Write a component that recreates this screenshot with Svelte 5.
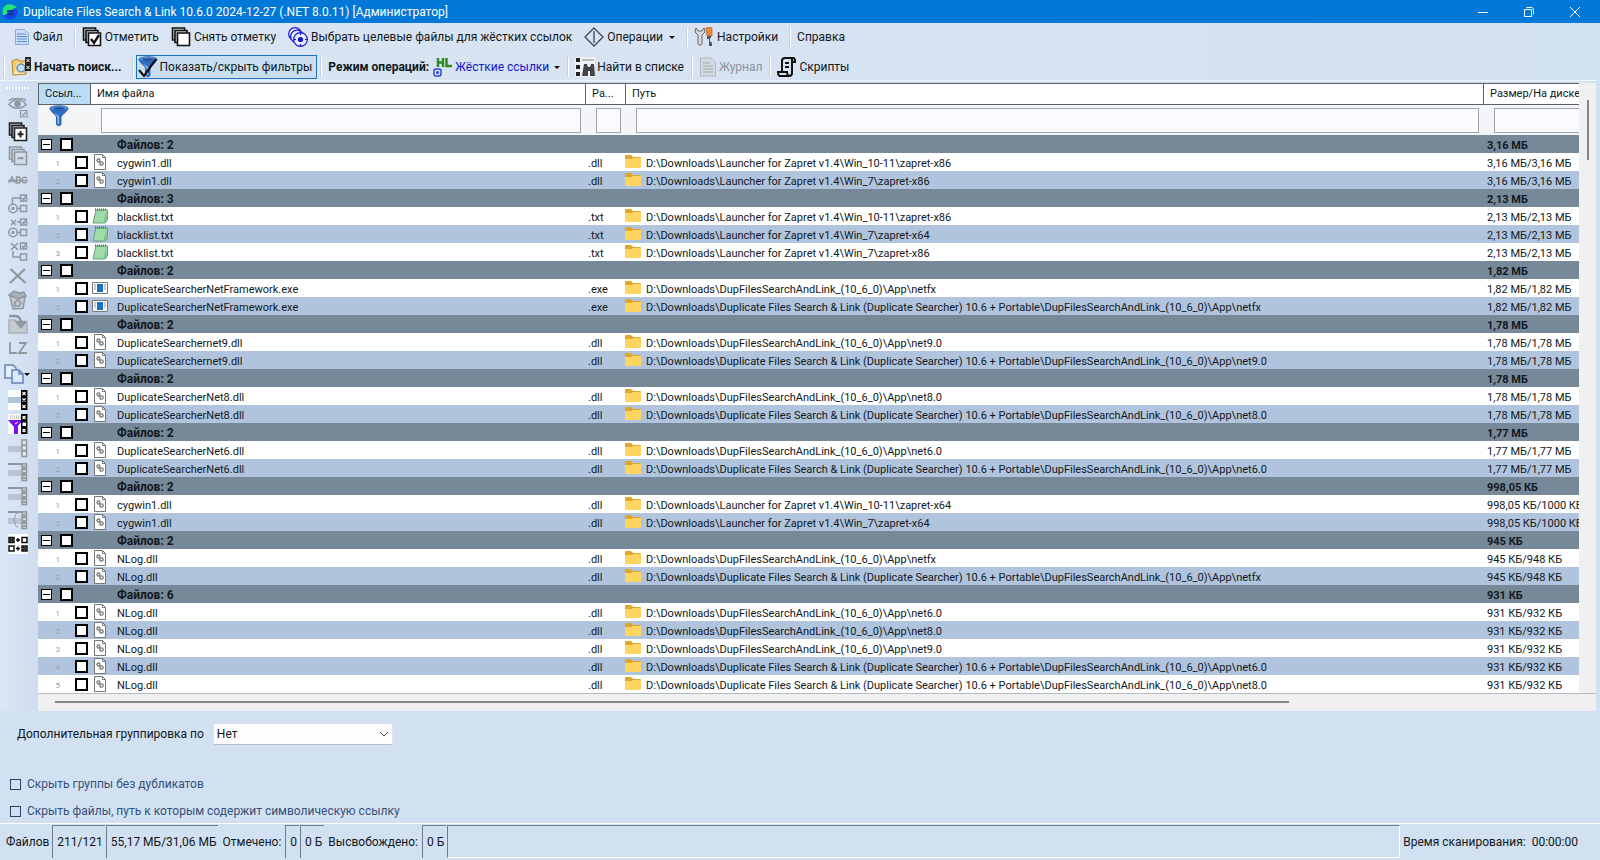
<script lang="ts">
  type FileRow = { name: string; ext: string; path: string; size: string };
  type Group = { size: string; files: FileRow[] };

  const launcher = 'D:\\Downloads\\Launcher for Zapret v1.4\\';
  const portable = 'D:\\Downloads\\DupFilesSearchAndLink_(10_6_0)\\App\\';
  const full = 'D:\\Downloads\\Duplicate Files Search & Link (Duplicate Searcher) 10.6 + Portable\\DupFilesSearchAndLink_(10_6_0)\\App\\';

  function group(name: string, total: string, size: string, paths: string[]): Group {
    const ext = name.slice(name.lastIndexOf('.'));
    return { size: total, files: paths.map((path) => ({ name, ext, path, size })) };
  }

  const groups: Group[] = [
    group('cygwin1.dll', '3,16 МБ', '3,16 МБ/3,16 МБ', [launcher + 'Win_10-11\\zapret-x86', launcher + 'Win_7\\zapret-x86']),
    group('blacklist.txt', '2,13 МБ', '2,13 МБ/2,13 МБ', [launcher + 'Win_10-11\\zapret-x86', launcher + 'Win_7\\zapret-x64', launcher + 'Win_7\\zapret-x86']),
    group('DuplicateSearcherNetFramework.exe', '1,82 МБ', '1,82 МБ/1,82 МБ', [portable + 'netfx', full + 'netfx']),
    group('DuplicateSearchernet9.dll', '1,78 МБ', '1,78 МБ/1,78 МБ', [portable + 'net9.0', full + 'net9.0']),
    group('DuplicateSearcherNet8.dll', '1,78 МБ', '1,78 МБ/1,78 МБ', [portable + 'net8.0', full + 'net8.0']),
    group('DuplicateSearcherNet6.dll', '1,77 МБ', '1,77 МБ/1,77 МБ', [portable + 'net6.0', full + 'net6.0']),
    group('cygwin1.dll', '998,05 КБ', '998,05 КБ/1000 КБ', [launcher + 'Win_10-11\\zapret-x64', launcher + 'Win_7\\zapret-x64']),
    group('NLog.dll', '945 КБ', '945 КБ/948 КБ', [portable + 'netfx', full + 'netfx']),
    group('NLog.dll', '931 КБ', '931 КБ/932 КБ', [portable + 'net6.0', portable + 'net8.0', portable + 'net9.0', full + 'net6.0', full + 'net8.0'])
  ];
  // the last group is cut off by the bottom of the list
  const counts = [2, 3, 2, 2, 2, 2, 2, 2, 6];

  const sideTools = [
    { icon: 'eye', label: 'Показать отмеченные' },
    { icon: 'expand', label: 'Развернуть все' },
    { icon: 'collapse', label: 'Свернуть все' },
    { icon: 'abc', label: 'Переименовать' },
    { icon: 'link1', label: 'Создать ссылки' },
    { icon: 'link2', label: 'Заменить ссылками' },
    { icon: 'link3', label: 'Разорвать ссылки' },
    { icon: 'cross', label: 'Удалить' },
    { icon: 'bin', label: 'В корзину' },
    { icon: 'move', label: 'Переместить' },
    { icon: 'lz', label: 'Сжать' },
    { icon: 'copy', label: 'Копировать', menu: true },
    { icon: 'rows', label: 'Отметить строки' },
    { icon: 'rowsFilter', label: 'Отметить по фильтру' },
    { icon: 'rowsOff', label: 'Снять отметку строк' },
    { icon: 'rowsCol', label: 'Отметить столбец' },
    { icon: 'rowsCol2', label: 'Отметить ниже' },
    { icon: 'rowsCol3', label: 'Отметить выше' },
    { icon: 'invert', label: 'Обратить отметку' }
  ];

  let showFilters = $state(true);
  let grouping = $state('Нет');
</script>

{#snippet stack(stroke: string, fill: string, mark: string)}
  <svg width="20" height="20" viewBox="0 0 20 20" fill={fill} stroke={stroke} stroke-width="1.6">
    <path d="M1.500 1h12v12h-12z" />
    <path d="M4 3.500h12v12h-12z" />
    <path d="M6.500 6h12v12.500h-12z" fill={mark === 'minus' ? fill : '#fff'} />
    {#if mark === 'check'}<path d="M9 12l3 4 5-8" fill="none" stroke-width="2.400" />{/if}
    {#if mark === 'plus'}<path d="M9.500 12.200h6M12.500 9v6.500" stroke-width="2" />{/if}
    {#if mark === 'minus'}<path d="M9.500 12.200h6" stroke-width="2" />{/if}
  </svg>
{/snippet}

{#snippet funnel(check: boolean)}
  <svg width="20" height="22" viewBox="0 0 20 22">
    <path d="M1 3c0 3 6 7 6.500 9v7.500c1 1.500 3.500 1.500 4.500 0V12c.5-2 7-6 7-9z" fill="#2d6fc4" stroke="#1d4f9e" stroke-width=".8" />
    <path d="M5 8l3.500 4v7h1.500v-8z" fill="#8fc4f5" />
    <ellipse cx="10" cy="3.200" rx="9" ry="2.500" fill="#5a9be0" stroke="#23589f" stroke-width=".8" />
    <ellipse cx="10" cy="3.500" rx="6" ry="1.300" fill="#1f5098" />
    {#if check}<path d="M1 14l5 6L18 3" fill="none" stroke="#111" stroke-width="2.200" />{/if}
  </svg>
{/snippet}

{#snippet rowIcon(name: string)}
  <svg width="20" height="20" viewBox="0 0 20 20">
    {#if name === 'rows' || name === 'rowsFilter'}
      <path fill="#fff" d="M0 0h20v20H0z" />
      {#if name === 'rows'}
        <path fill="#b0c4de" d="M0 7h14v6H0z" />
      {:else}
        <path d="M2 2h11M2 4h11" stroke="#999" stroke-dasharray="1 1" />
        <path fill="#7a10f0" d="M0 6h15l-5 6v8H6v-7z" />
        <path d="M7 10l3-2" stroke="#fff" />
      {/if}
      <path d="M13 0h6.500v20H13z" />
      <path d="M14.500 2l3 3m0-3l-3 3m0 10l3 3m0-3l-3 3" stroke="#fff" stroke-width="1.200" />
      {#if name === 'rows'}<path d="M14.500 8.500l3 3m0-3l-3 3" stroke="#fff" stroke-width="1.200" />{:else}<path fill="#fff" d="M14.500 8.500h3.500v3.500h-3.500z" />{/if}
    {:else}
      <path fill="#bdc4cc" d="M0 8h14v6H0z" />
      {#if name !== 'rowsOff'}<path fill="#8f969e" d="M0 1h19v2H0z" />{/if}
      {#if name === 'rowsCol3'}<path d="M10 3c-5 1-1 6-5 7 4 1 0 6 5 7" fill="none" stroke="#8f969e" />{/if}
      <path fill="#e3e9ef" stroke="#8f969e" stroke-width="1.500" d="M14 2h4.500v5H14zM14 7.500h4.500v5H14zM14 13h4.500v5.500H14z" />
      {#if name !== 'rowsOff'}<path d="M15 4l2.500 2m0-2L15 6m0 4l2.500 2m0-2L15 12m0 3l2.500 2m0-2L15 17" stroke="#8f969e" stroke-width="1.300" />{/if}
    {/if}
  </svg>
{/snippet}

{#snippet icon(name: string)}
  {#if name === 'expand'}{@render stack('#222', '#a9b1ba', 'plus')}
  {:else if name === 'collapse'}{@render stack('#8f969e', '#d3dde8', 'minus')}
  {:else if name.startsWith('rows')}{@render rowIcon(name)}
  {:else}
    <svg width="20" height="20" viewBox="0 0 20 20" fill="none" stroke="#90979f" stroke-width="1.500">
      {#if name === 'eye'}
        <path d="M1 6.500c4-6 13-6 17 0-4 5-13 5-17 0zM1 2.500c4-3 13-3 17 0" /><circle cx="9.500" cy="6" r="2.600" fill="#90979f" />
        <path d="M12.500 12.500h6.500v6.500h-6.500zM14 15.500l1.500 2 2.500-4" stroke-width="1.200" />
      {:else if name === 'abc'}
        <path d="M1 13l3-6 3 6M2 11h4M8.500 7v6h2.500c2 0 2-3 0-3 1.500 0 1.500-3 0-3zM19 8c-4-2-5 0-5 2s2 4 5 2M0 10.500h20" />
      {:else if name === 'link1'}
        <path d="M4.500 11V4h8M9 14.500h4M12.500 1h6v6h-6zM12.500 11.500h6v6h-6z" /><circle cx="5" cy="14.500" r="4.200" /><circle cx="5" cy="14.500" r="1" fill="#90979f" />
        <path d="M14 4l1.500 1.500L18 2" />
      {:else if name === 'link2'}
        <path d="M3 2l5 5m0-5L3 7M9 4h3M9 14.500h4M12.500 1h6v6h-6zM12.500 11.500h6v6h-6z" /><circle cx="5" cy="14.500" r="4.200" /><circle cx="5" cy="14.500" r="1" fill="#90979f" />
        <path d="M14 4l1.500 1.500L18 2" />
      {:else if name === 'link3'}
        <path d="M3 1l7 7m0-7L3 8M5 9v6h8M12.500 1h6v6h-6zM12.500 12h6v6h-6z" /><path d="M14 4l1.500 1.500L18 2" />
      {:else if name === 'cross'}
        <path d="M2.500 3l15 14M17 3L2 17" stroke-width="2.200" />
      {:else if name === 'bin'}
        <path d="M2 6l15 1-2 11.500-10 .5z" fill="#c3cad1" /><path d="M1 5l5-4 5 2 5-1 2 4-8 3z" fill="#a9b0b8" /><path d="M7 12l3-2 3 3-2 3H7z" />
      {:else if name === 'move'}
        <path d="M1 6h6l2 3h10v10H1z" fill="#c3cad1" stroke="#a9b0b8" /><path d="M1 2h6c4 0 6 2 6 8M9 8l4 5 4-5z" fill="none" stroke-width="2.400" />
      {:else if name === 'lz'}
        <path d="M2 4v11h7M11 5h7l-7 10h8" stroke-width="1.800" />
      {:else if name === 'copy'}
        <path d="M1 1h8l3 3v10H1z" fill="#e5eefb" stroke="#6484b4" /><path d="M8 6h7l4 4v9H8zM15 6v4h4" fill="#dce8fa" stroke="#6484b4" />
      {:else if name === 'invert'}
        <path fill="#fff" stroke="none" d="M0 0h20v20H0z" />
        <path d="M1 3.500h5v5H1zM14 3.500h5v5h-5zM1 12h5v5H1zM14 12h5v5h-5zM8 6h4M10 4v4M8 14.500h4M10 12.500v4M2 4.500l3 3m0-3l-3 3M15 13l3 3m0-3l-3 3" stroke="#111" />
      {/if}
    </svg>
  {/if}
{/snippet}

{#snippet fileIcon(ext: string)}
  {#if ext === '.dll'}
    <svg width="16" height="16" viewBox="0 0 16 16">
      <path d="M2.500.5h8l3 3v12h-11z" fill="#fff" stroke="#777" /><path d="M10.500.5v3h3" fill="none" stroke="#777" />
      <circle cx="6.500" cy="6.500" r="1.500" fill="none" stroke="#777" stroke-width="1.300" /><circle cx="9.500" cy="9.500" r="1.700" fill="none" stroke="#777" stroke-width="1.300" />
    </svg>
  {:else if ext === '.txt'}
    <svg width="16" height="16" viewBox="0 0 16 16">
      <path d="M4 2h11.500v9q-1 4-3 4H1z" fill="#9fdcab" stroke="#6c9f79" /><path d="M14.500 3v8q-1 3-3 4z" fill="#74bd86" />
      <path d="M3 1.500h12" stroke="#4e6b56" stroke-width="2" stroke-dasharray="1 1" />
    </svg>
  {:else}
    <svg width="16" height="16" viewBox="0 0 16 16">
      <path d="M.5 2.500h15v11H.5z" fill="#fff" stroke="#777" /><path d="M5 4h6v8H5z" fill="#1673c4" /><path d="M2 5h2M2 7h2M2 9h2M12 5h2M12 7h2M12 9h2" stroke="#999" />
    </svg>
  {/if}
{/snippet}

<div class="window">
  <header class="titlebar">
    <svg width="16" height="16" viewBox="0 0 16 16">
      <circle cx="8" cy="8" r="7.500" fill="#1248e8" /><path d="M1 11C-1 4 4-1 9 .5c3 0 5 2 6 4-3-2-4 2-7 2-3 1-2 5-7 4.500z" fill="#25e37c" />
      <path d="M5 7h6M5 10h6" stroke="#0d2a80" stroke-width="1.500" />
    </svg>
    <h1>Duplicate Files Search &amp; Link 10.6.0 2024-12-27 (.NET 8.0.11) [Администратор]</h1>
    <div class="window-buttons">
      <button aria-label="Свернуть"><svg width="10" height="10" viewBox="0 0 10 10"><path d="M0 5.500h10" /></svg></button>
      <button aria-label="Восстановить"><svg width="10" height="10" viewBox="0 0 10 10"><path d="M.5 2.500h7v7h-7zM2.500.5h5q2 0 2 2v5" /></svg></button>
      <button aria-label="Закрыть"><svg width="10" height="10" viewBox="0 0 10 10"><path d="M0 0l10 10M10 0L0 10" /></svg></button>
    </div>
  </header>

  <div class="toolbars">
    <nav class="toolbar main-menu">
      <button class="tool">
        <svg width="16" height="18" viewBox="0 0 16 18"><path d="M1.500 1.500h9l4 4v11h-13z" fill="#c9dcf8" stroke="#86a8dc" /><path d="M3 6h9M3 8.500h10M3 11h10M3 13.500h10" stroke="#5d8cd6" /></svg>
        Файл
      </button>
      <span class="sep"></span>
      <button class="tool">{@render stack('#111', '#c3cbd4', 'check')}Отметить</button>
      <button class="tool">{@render stack('#111', '#c3cbd4', '')}Снять отметку</button>
      <button class="tool">
        <svg width="20" height="20" viewBox="0 0 20 20" fill="#e8effa" stroke="#1717d8" stroke-width="1.200">
          <circle cx="7" cy="7" r="6.300" /><circle cx="9" cy="9.500" r="6.300" /><circle cx="12.500" cy="12.500" r="6.800" /><circle cx="12.500" cy="12.500" r="2" fill="#1717d8" />
          <path d="M12.500 6v2M12.500 17v2M6 12.500h2M17 12.500h2" />
        </svg>
        Выбрать целевые файлы для жёстких ссылок
      </button>
      <button class="tool">
        <svg width="20" height="20" viewBox="0 0 20 20" fill="none" stroke="#34495e" stroke-width="1.300"><path d="M10 1l9 9-9 9-9-9zM10 4v12" /></svg>
        Операции <i class="caret"></i>
      </button>
      <span class="sep"></span>
      <button class="tool">
        <svg width="20" height="20" viewBox="0 0 20 20">
          <path d="M2 1L1 5l3 3v9q2 3 4 0V8l3-3-1-4-2 3H4z" fill="#d8d8d8" stroke="#666" /><path d="M12 1l4-1 2 1v8h-5z" fill="#f08a38" stroke="#a75819" stroke-width=".6" /><path d="M13 9h4v2h-1v3l2 2v3h-3v-7h-2z" fill="#555" />
        </svg>
        Настройки
      </button>
      <span class="sep"></span>
      <button class="tool plain">Справка</button>
    </nav>
    <nav class="toolbar commands">
      <span class="sep"></span>
      <button class="tool strong">
        <svg width="20" height="20" viewBox="0 0 20 20"><path d="M1 4l5-2 3 2h6v13l-13 1z" fill="#f4ca75" stroke="#ba842a" /><path d="M6 6h8l-2 11H3z" fill="#ffe9b0" /><circle cx="10" cy="11" r="4" fill="#c3ddf5" stroke="#668dae" stroke-width="1.500" /><path d="M14 0h6v14h-6z" fill="#222" /><path d="M15.500 2l3 3m0-3l-3 3M15.500 9l3 3m0-3l-3 3" stroke="#fff" /></svg>
        Начать поиск...
      </button>
      <span class="sep"></span>
      <button class="tool toggle" class:pressed={showFilters} aria-pressed={showFilters} onclick={() => (showFilters = !showFilters)}>
        {@render funnel(true)}Показать/скрыть фильтры
      </button>
      <span class="sep"></span>
      <span class="mode">Режим операций:</span>
      <button class="tool links">
        <svg width="20" height="20" viewBox="0 0 20 20" fill="none"><path d="M5 1v9M10 1v9M5 5.500h5M13.500 1v8H19" stroke="#2d8a1c" stroke-width="2.400" /><rect x="1" y="12" width="7" height="7" rx="2" stroke="#2c44d8" stroke-width="1.500" /><circle cx="4.500" cy="15.500" r="1.500" fill="#2c44d8" /></svg>
        Жёсткие ссылки <i class="caret"></i>
      </button>
      <span class="sep"></span>
      <button class="tool">
        <svg width="20" height="20" viewBox="0 0 20 20"><path d="M0 0h20v20H0z" fill="#edf2f7" /><path d="M1 1h4v4H1zM1 8h4v4H1zM1 15h4v4H1z" fill="#222" /><path d="M7 3h12" stroke="#aaa" stroke-width="1.500" /><path d="M9 7h3l1 3h2l1-3h3l1 12h-5v-5h-2v5H7z" fill="#444" /></svg>
        Найти в списке
      </button>
      <span class="sep"></span>
      <button class="tool" disabled>
        <svg width="18" height="20" viewBox="0 0 18 20"><path d="M1.500 1h11l4 4v14h-15z" fill="#d3d9df" stroke="#b3bac1" /><path d="M4 6h7M4 9h10M4 12h10M4 15h10" stroke="#a2aab2" /></svg>
        Журнал
      </button>
      <span class="sep"></span>
      <button class="tool">
        <svg width="20" height="20" viewBox="0 0 20 20" fill="none" stroke="#111" stroke-width="2"><path d="M5 14V4q0-3 3-3h8q2 0 2 3v1h-3v11q0 3-3 3H3q-2 0-2-4h9q0 4 3 4M15 5V2M8 6h4M8 10h4" /></svg>
        Скрипты
      </button>
    </nav>
  </div>

  <main>
    <aside class="side">
      <div class="grip"></div>
      {#each sideTools as tool}
        <button class:menu={tool.menu} aria-label={tool.label}>
          {@render icon(tool.icon)}
          {#if tool.menu}<i class="caret"></i>{/if}
        </button>
      {/each}
    </aside>

    <div class="grid">
      <div class="list">
        <table>
          <colgroup>
            <col class="c-link" /><col class="c-name" /><col class="c-ext" /><col /><col class="c-size" />
          </colgroup>
          <thead>
            <tr class="head">
              <th class="sorted">Ссыл...</th>
              <th>Имя файла</th>
              <th>Ра...</th>
              <th>Путь</th>
              <th>Размер/На диске</th>
            </tr>
            {#if showFilters}
              <tr class="filters">
                <td class="funnel">{@render funnel(false)}</td>
                <td><input type="text" aria-label="Имя файла" /></td>
                <td><input type="text" aria-label="Расширение" /></td>
                <td><input type="text" aria-label="Путь" /></td>
                <td><input class="wide" type="text" aria-label="Размер/На диске" /></td>
              </tr>
            {/if}
          </thead>
          <tbody>
            {#each groups as g, gi}
              <tr class="group">
                <td>
                  <div class="cell">
                    <button class="expander" aria-label="Свернуть группу"></button>
                    <input type="checkbox" aria-label="Отметить группу" />
                  </div>
                </td>
                <td colspan="3" class="text group-name">Файлов: {counts[gi]}</td>
                <td class="text size">{g.size}</td>
              </tr>
              {#each g.files as file, fi}
                <tr class="file" class:alt={fi % 2 === 1}>
                  <td>
                    <div class="cell end"><span class="text num">{fi + 1}</span><input type="checkbox" aria-label={file.name} /></div>
                  </td>
                  <td><div class="cell name">{@render fileIcon(file.ext)}<span class="text">{file.name}</span></div></td>
                  <td class="text ext">{file.ext}</td>
                  <td>
                    <div class="cell path">
                      <svg width="16" height="14" viewBox="0 0 16 14"><path d="M0 1q0-1 1-1h5l2 2h7q1 0 1 1v9H0z" fill="#e0a62a" /><path d="M0 4h7l1-1h8v9q0 1-1 1H1q-1 0-1-1z" fill="#ffd561" /></svg>
                      <span class="text">{file.path}</span>
                    </div>
                  </td>
                  <td class="text size">{file.size}</td>
                </tr>
              {/each}
            {/each}
          </tbody>
        </table>
        <div class="vscroll"><div class="thumb"></div></div>
      </div>
      <div class="hscroll"><div class="thumb"></div></div>
    </div>
  </main>

  <section class="options">
    <div class="grouping">
      <label for="grouping">Дополнительная группировка по</label>
      <div class="select">
        <select id="grouping" bind:value={grouping}>
          <option>Нет</option>
        </select>
        <svg width="10" height="6" viewBox="0 0 10 6"><path d="M1 1l4 4 4-4" fill="none" stroke="#555" /></svg>
      </div>
    </div>
    <label class="option"><input type="checkbox" />Скрыть группы без дубликатов</label>
    <label class="option"><input type="checkbox" />Скрыть файлы, путь к которым содержит символическую ссылку</label>
  </section>

  <footer class="status">
    <span class="total">Файлов</span>
    <span class="box">211/121</span>
    <span class="box">55,17 МБ/31,06 МБ</span>
    <span class="caption">Отмечено:</span>
    <span class="box">0</span>
    <span class="box">0 Б</span>
    <span class="caption">Высвобождено:</span>
    <span class="box">0 Б</span>
    <span class="box progress"></span>
    <span class="time">Время сканирования:</span>
    <span class="clock">00:00:00</span>
  </footer>
</div>

<style>
  :global(body) {
    margin: 0;
    background: #d2e1f1;
  }

  * {
    box-sizing: border-box;
  }

  .window {
    display: flex;
    flex-direction: column;
    min-height: 100vh;
    color: #101820;
    font-family: Roboto, 'Open Sans', sans-serif;
    font-size: 12px;
    line-height: 16px;
    white-space: nowrap;
  }

  button {
    padding: 0;
    border: 0;
    background: none;
    color: inherit;
    font: inherit;
  }

  svg {
    display: block;
    flex: none;
  }

  .titlebar {
    display: flex;
    align-items: center;
    gap: 5px;
    height: 23px;
    padding: 0 2px;
    background: #0078d7;
    color: #fff;
  }

  h1 {
    flex: 1;
    margin: 0;
    font-size: 12px;
    font-weight: 400;
  }

  .window-buttons {
    display: flex;
  }

  .window-buttons button {
    display: flex;
    align-items: center;
    justify-content: center;
    width: 46px;
    height: 20px;
  }

  .window-buttons path {
    fill: none;
    stroke: #fff;
  }

  .toolbars {
    margin-right: 3px;
    border-bottom: 1px solid #f3f8fd;
    background: linear-gradient(90deg, #dbe5f3, #d2e1f1);
  }

  .toolbar {
    display: flex;
    align-items: center;
    height: 28px;
  }

  .commands {
    height: 29px;
    padding-top: 3px;
  }

  .main-menu {
    padding-left: 10px;
  }

  .tool {
    display: flex;
    align-items: center;
    gap: 3px;
    height: 24px;
    padding: 0 8px 0 4px;
  }

  .tool:disabled {
    color: #8b939b;
  }

  .strong,
  .mode {
    font-weight: 700;
  }

  .mode {
    margin-left: 4px;
  }

  .mode ~ .tool {
    gap: 2px;
    padding-right: 4px;
  }

  .toggle {
    gap: 1px;
    padding: 0 4px 0 1px;
    border: 1px solid transparent;
  }

  .pressed {
    border-color: #1a72c0;
    background: #cadef2;
  }

  .links {
    color: #1616d0;
  }

  .caret {
    width: 0;
    margin-left: 3px;
    border: 3px solid transparent;
    border-top-color: #111;
    border-bottom: 0;
  }

  .sep {
    width: 2px;
    height: 20px;
    margin: 0 2px 0 3px;
    border-left: 1px solid #c5d1e0;
    border-right: 1px solid #fff;
  }

  main {
    display: flex;
    padding-right: 4px;
  }

  .side {
    display: flex;
    flex-direction: column;
    width: 38px;
    padding-top: 6px;
    background: linear-gradient(90deg, #d9e6f6, #cfddef);
  }

  .grip {
    height: 2px;
    margin: 0 9px 7px 6px;
    background: repeating-linear-gradient(90deg, #fff 0 2px, #b8c6d8 2px 3px);
  }

  .side button {
    display: flex;
    align-items: center;
    height: 24px;
    padding-left: 8px;
  }

  .side .menu {
    height: 28px;
    padding-left: 4px;
  }

  .side .caret {
    margin-left: 0;
  }

  .grid {
    flex: 1;
    min-width: 0;
    padding-top: 2px;
  }

  .list {
    display: flex;
    border-bottom: 1px solid #b5bbc2;
  }

  table {
    flex: 1;
    width: 0;
    table-layout: fixed;
    border-spacing: 0;
    font-size: 11px;
  }

  .c-link {
    width: 52px;
  }

  .c-name {
    width: 495px;
  }

  .c-ext {
    width: 40px;
  }

  .c-size {
    width: 96px;
  }

  th,
  td {
    height: 18px;
    padding: 0;
    overflow: hidden;
    line-height: 18px;
    text-align: left;
    vertical-align: middle;
  }

  .head th {
    height: 22px;
    padding-left: 6px;
    border: solid #5b6168;
    border-width: 1px 0 1px 1px;
    background: #fff;
    font-size: 11px;
    font-weight: 400;
  }

  .head .sorted {
    background: #bcdcf4;
  }

  .filters td {
    height: 30px;
    padding: 0 4px 0 11px;
    background: #f4f5f7;
  }

  .filters .funnel {
    vertical-align: top;
  }

  .filters input {
    display: block;
    width: 100%;
    height: 25px;
    padding: 0 4px;
    border: 1px solid #a2a4a8;
    border-radius: 0;
    background: #fafbfe;
  }

  .filters .wide {
    width: 140px;
  }

  .group td {
    background: #778899;
    font-weight: 700;
  }

  .text {
    padding-top: 3px;
    line-height: 15px;
  }

  .group .group-name {
    padding-left: 27px;
    font-size: 12px;
  }

  .file td {
    background: #fff;
  }

  .alt td {
    background: #b0c4de;
  }

  .cell {
    display: flex;
    align-items: center;
    height: 18px;
  }

  .cell.end {
    justify-content: flex-end;
    padding-right: 2px;
  }

  .num {
    margin-right: 15px;
    color: #989ea6;
    font-size: 8px;
  }

  .cell input {
    width: 13px;
    height: 13px;
    margin: 0;
    border: 2px solid #000;
    background: #fff;
    appearance: none;
  }

  .expander {
    width: 11px;
    height: 11px;
    margin: 0 8px 0 3px;
    border: 1px solid #000;
    background: linear-gradient(#000, #000) center / 7px 1px no-repeat #fff;
  }

  .name {
    gap: 9px;
    padding-left: 2px;
  }

  .ext {
    padding-left: 3px;
  }

  .path {
    gap: 5px;
  }

  .size {
    padding-left: 4px;
  }

  .vscroll {
    width: 17px;
    padding: 17px 8px 0;
    background: #f0f0f0;
  }

  .vscroll .thumb {
    width: 2px;
    height: 60px;
    background: #858585;
  }

  .hscroll {
    height: 17px;
    padding: 7px 17px 0;
    background: #f0f0f0;
  }

  .hscroll .thumb {
    width: 81%;
    height: 2px;
    background: #858585;
  }

  .options {
    display: flex;
    flex: 1;
    flex-direction: column;
    padding: 12px 10px 0;
  }

  .grouping {
    display: flex;
    align-items: center;
    gap: 9px;
    margin: 0 0 28px 7px;
  }

  .select {
    position: relative;
  }

  .select svg {
    position: absolute;
    top: 8px;
    right: 4px;
  }

  select {
    display: block;
    width: 180px;
    height: 22px;
    padding: 0 3px;
    border: 1px solid #e0e4e9;
    border-bottom-color: #b5bdc6;
    border-radius: 2px;
    background: #fdfdfe;
    color: inherit;
    font: inherit;
    appearance: none;
  }

  .option {
    display: flex;
    align-items: center;
    gap: 6px;
    height: 22px;
    margin-bottom: 5px;
    color: #34507c;
  }

  .option:last-child {
    margin-bottom: 0;
  }

  .option input {
    width: 11px;
    height: 11px;
    margin: 0;
    border: 1px solid #2f4468;
    appearance: none;
  }

  .status {
    display: flex;
    align-items: center;
    height: 37px;
    padding: 1px 22px 2px 6px;
    border-top: 1px solid #fff;
  }

  .total {
    margin-right: 2px;
  }

  .box {
    display: flex;
    align-items: center;
    height: 33px;
    margin-left: 1px;
    padding: 0 2px 0 4px;
    border-top: 1px solid #6f7c8b;
    border-left: 1px solid #6f7c8b;
  }

  .caption {
    margin: 0 3px 0 4px;
  }

  .progress {
    flex: 1;
    border-right: 1px solid #fff;
    border-bottom: 1px solid #fff;
  }

  .time {
    margin: 0 6px 0 3px;
  }
</style>
